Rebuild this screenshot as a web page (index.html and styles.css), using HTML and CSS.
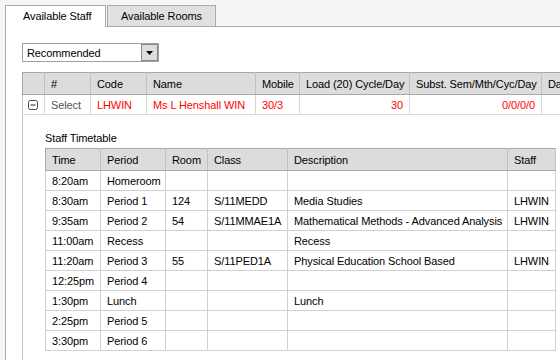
FILE: index.html
```html
<!DOCTYPE html>
<html lang="en">
<head>
  <meta charset="UTF-8">
  <title>Available Staff</title>
  <link rel="stylesheet" href="styles.css">
</head>
<body>
  <div class="tabs">
    <div class="tab active">Available Staff</div>
    <div class="tab">Available Rooms</div>
  </div>
  <div class="panel">
    <div class="select">
      <span class="select-text">Recommended</span>
      <span class="select-btn">
        <svg width="7" height="4" viewBox="0 0 7 4"><path d="M0 0h7L3.5 4z" fill="#000"/></svg>
      </span>
    </div>

    <table class="staff">
      <colgroup>
        <col style="width:22px">
        <col style="width:46px">
        <col style="width:56px">
        <col style="width:109px">
        <col style="width:44px">
        <col style="width:110px">
        <col style="width:132px">
        <col style="width:60px">
      </colgroup>
      <thead>
        <tr>
          <th></th>
          <th>#</th>
          <th>Code</th>
          <th>Name</th>
          <th>Mobile</th>
          <th>Load (20) Cycle/Day</th>
          <th>Subst. Sem/Mth/Cyc/Day</th>
          <th>Day</th>
        </tr>
      </thead>
      <tbody>
        <tr class="staff-row">
          <td class="toggle">
            <svg width="10" height="10" viewBox="0 0 10 10"><rect x="0.5" y="0.5" width="9" height="9" rx="2" fill="#fff" stroke="#444"/><path d="M2.5 5h5" stroke="#222" stroke-width="1"/></svg>
          </td>
          <td class="select-link">Select</td>
          <td class="red">LHWIN</td>
          <td class="red">Ms L Henshall WIN</td>
          <td class="red">30/3</td>
          <td class="red num">30</td>
          <td class="red num">0/0/0/0</td>
          <td></td>
        </tr>
        <tr class="detail">
          <td colspan="8">
            <div class="detail-title">Staff Timetable</div>
            <table class="timetable">
              <colgroup>
                <col style="width:55px">
                <col style="width:65px">
                <col style="width:42px">
                <col style="width:80px">
                <col style="width:220px">
                <col style="width:48px">
              </colgroup>
              <thead>
                <tr><th>Time</th><th>Period</th><th>Room</th><th>Class</th><th>Description</th><th>Staff</th></tr>
              </thead>
              <tbody>
                <tr><td>8:20am</td><td>Homeroom</td><td></td><td></td><td></td><td></td></tr>
                <tr><td>8:30am</td><td>Period 1</td><td>124</td><td>S/11MEDD</td><td>Media Studies</td><td>LHWIN</td></tr>
                <tr><td>9:35am</td><td>Period 2</td><td>54</td><td>S/11MMAE1A</td><td>Mathematical Methods - Advanced Analysis</td><td>LHWIN</td></tr>
                <tr><td>11:00am</td><td>Recess</td><td></td><td></td><td>Recess</td><td></td></tr>
                <tr><td>11:20am</td><td>Period 3</td><td>55</td><td>S/11PED1A</td><td>Physical Education School Based</td><td>LHWIN</td></tr>
                <tr><td>12:25pm</td><td>Period 4</td><td></td><td></td><td></td><td></td></tr>
                <tr><td>1:30pm</td><td>Lunch</td><td></td><td></td><td>Lunch</td><td></td></tr>
                <tr><td>2:25pm</td><td>Period 5</td><td></td><td></td><td></td><td></td></tr>
                <tr><td>3:30pm</td><td>Period 6</td><td></td><td></td><td></td><td></td></tr>
              </tbody>
            </table>
          </td>
        </tr>
      </tbody>
    </table>
  </div>
</body>
</html>
```

FILE: styles.css
```css
html, body {
  margin: 0;
  height: 100%;
  overflow: hidden;
}
body {
  font-family: "Liberation Sans", Arial, sans-serif;
  font-size: 11px;
  letter-spacing: -0.1px;
  color: #000;
  background: #f5f5f5;
}
.tabs {
  display: flex;
  align-items: flex-start;
  gap: 1px;
  height: 21px;
  padding: 5px 0 0 5px;
}
.tab {
  box-sizing: border-box;
  height: 21px;
  line-height: 20px;
  border: 1px solid #aaa;
  border-bottom: none;
  background: #e0e0e0;
  width: 109px;
  text-align: center;
}
.tab.active {
  position: relative;
  z-index: 1;
  width: 101px;
  height: 22px;
  margin-bottom: -1px;
  background: #fff;
  text-align: left;
  padding-left: 17px;
}
.panel {
  box-sizing: border-box;
  margin-left: 5px;
  height: calc(100% - 26px);
  overflow: hidden;
  background: #fff;
  border-left: 1px solid #aaa;
  border-top: 1px solid #aaa;
  padding: 16px 0 0 16px;
}
.select {
  box-sizing: border-box;
  display: flex;
  align-items: center;
  justify-content: space-between;
  width: 137px;
  height: 19px;
  border: 1px solid #a0a0a0;
  padding: 0 0 0 4px;
}
.select-btn {
  box-sizing: border-box;
  display: flex;
  align-items: center;
  justify-content: center;
  width: 17px;
  height: 17px;
  background: #ddd;
  border: 1px solid #888;
}
.staff {
  margin-top: 10px;
  border-collapse: collapse;
  table-layout: fixed;
  width: 579px;
}
.staff th {
  height: 21px;
  background: #dcdcdc;
  border: 1px solid #a8a8a8;
  border-left-color: #c0c0c0;
  border-right-color: #c0c0c0;
  font-weight: normal;
  text-align: left;
  padding: 0 6px;
  white-space: nowrap;
  overflow: hidden;
}
.staff thead th:first-child {
  border-left-color: #a8a8a8;
}
.staff-row td {
  height: 19px;
  padding: 0 6px;
  border: 1px solid #d8d8d8;
  border-top: none;
  white-space: nowrap;
}
.staff-row .toggle {
  padding: 0 0 0 5px;
  border-left-color: #c0c0c0;
}
.toggle svg {
  display: block;
}
.select-link {
  color: #555;
}
.red {
  color: #ff0000;
}
.num {
  text-align: right;
}
.detail > td {
  border-left: 1px solid #c0c0c0;
  padding: 16px 0 20px 22px;
}
.detail-title {
  line-height: 14px;
  margin-bottom: 3px;
}
.timetable {
  border-collapse: collapse;
  table-layout: fixed;
  width: 510px;
  border: 1px solid #a0a0a0;
}
.timetable th {
  height: 21px;
  background: #dcdcdc;
  border: 1px solid #a8a8a8;
  border-left-color: #c0c0c0;
  border-right-color: #c0c0c0;
  font-weight: normal;
  text-align: left;
  padding: 0 6px;
}
.timetable td {
  height: 19px;
  padding: 0 6px;
  border: 1px solid #d0d0d0;
  white-space: nowrap;
}
```
